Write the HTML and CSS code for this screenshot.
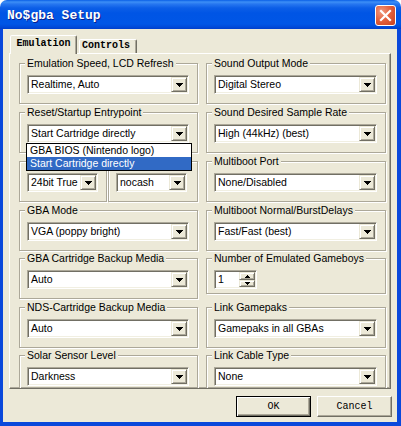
FILE: index.html
```html
<!DOCTYPE html>
<html>
<head>
<meta charset="utf-8">
<link rel="stylesheet" href="styles.css">
</head>
<body>
<div class="window">
  <div class="titlebar">
    <span class="title">No$gba Setup</span>
    <div class="close"><svg width="19" height="19" viewBox="0 0 19 19"><path d="M5 5L14 14M14 5L5 14" stroke="#fff" stroke-width="2.2" stroke-linecap="square"/></svg></div>
  </div>
  <div class="client">
    <div class="tabs">
      <div class="tab active">Emulation</div>
      <div class="tab">Controls</div>
    </div>
    <div class="panel">
      <div class="grid">
        <div class="group"><span class="legend">Emulation Speed, LCD Refresh</span>
          <div class="combo"><span class="val">Realtime, Auto</span><span class="drop"><svg width="7" height="4" viewBox="0 0 7 4"><path d="M0 0h7v1h-1v1h-1v1h-1v1h-1v-1h-1v-1h-1v-1h-1z"/></svg></span></div>
        </div>
        <div class="group"><span class="legend">Sound Output Mode</span>
          <div class="combo"><span class="val">Digital Stereo</span><span class="drop"><svg width="7" height="4" viewBox="0 0 7 4"><path d="M0 0h7v1h-1v1h-1v1h-1v1h-1v-1h-1v-1h-1v-1h-1z"/></svg></span></div>
        </div>

        <div class="group"><span class="legend">Reset/Startup Entrypoint</span>
          <div class="combo"><span class="val">Start Cartridge directly</span><span class="drop"><svg width="7" height="4" viewBox="0 0 7 4"><path d="M0 0h7v1h-1v1h-1v1h-1v1h-1v-1h-1v-1h-1v-1h-1z"/></svg></span>
            <div class="list">
              <div class="item">GBA BIOS (Nintendo logo)</div>
              <div class="item sel">Start Cartridge directly</div>
            </div>
          </div>
        </div>
        <div class="group"><span class="legend">Sound Desired Sample Rate</span>
          <div class="combo"><span class="val">High (44kHz) (best)</span><span class="drop"><svg width="7" height="4" viewBox="0 0 7 4"><path d="M0 0h7v1h-1v1h-1v1h-1v1h-1v-1h-1v-1h-1v-1h-1z"/></svg></span></div>
        </div>

        <div class="split">
          <div class="group small-a"><span class="legend empty"></span>
            <div class="combo"><span class="val">24bit True</span><span class="drop"><svg width="7" height="4" viewBox="0 0 7 4"><path d="M0 0h7v1h-1v1h-1v1h-1v1h-1v-1h-1v-1h-1v-1h-1z"/></svg></span></div>
          </div>
          <div class="group small-b"><span class="legend empty"></span>
            <div class="combo"><span class="val">nocash</span><span class="drop"><svg width="7" height="4" viewBox="0 0 7 4"><path d="M0 0h7v1h-1v1h-1v1h-1v1h-1v-1h-1v-1h-1v-1h-1z"/></svg></span></div>
          </div>
        </div>
        <div class="group"><span class="legend">Multiboot Port</span>
          <div class="combo"><span class="val">None/Disabled</span><span class="drop"><svg width="7" height="4" viewBox="0 0 7 4"><path d="M0 0h7v1h-1v1h-1v1h-1v1h-1v-1h-1v-1h-1v-1h-1z"/></svg></span></div>
        </div>

        <div class="group"><span class="legend">GBA Mode</span>
          <div class="combo"><span class="val">VGA (poppy bright)</span><span class="drop"><svg width="7" height="4" viewBox="0 0 7 4"><path d="M0 0h7v1h-1v1h-1v1h-1v1h-1v-1h-1v-1h-1v-1h-1z"/></svg></span></div>
        </div>
        <div class="group"><span class="legend">Multiboot Normal/BurstDelays</span>
          <div class="combo"><span class="val">Fast/Fast (best)</span><span class="drop"><svg width="7" height="4" viewBox="0 0 7 4"><path d="M0 0h7v1h-1v1h-1v1h-1v1h-1v-1h-1v-1h-1v-1h-1z"/></svg></span></div>
        </div>

        <div class="group"><span class="legend">GBA Cartridge Backup Media</span>
          <div class="combo"><span class="val">Auto</span><span class="drop"><svg width="7" height="4" viewBox="0 0 7 4"><path d="M0 0h7v1h-1v1h-1v1h-1v1h-1v-1h-1v-1h-1v-1h-1z"/></svg></span></div>
        </div>
        <div class="group short"><span class="legend">Number of Emulated Gameboys</span>
          <div class="spin"><span class="val">1</span>
            <span class="spinbtns">
              <span class="sbtn"><svg width="5" height="3" viewBox="0 0 5 3"><path d="M2 0h1v1h1v1h1v1h-5v-1h1v-1h1z"/></svg></span>
              <span class="sbtn"><svg width="5" height="3" viewBox="0 0 5 3"><path d="M0 0h5v1h-1v1h-1v1h-1v-1h-1v-1h-1z"/></svg></span>
            </span>
          </div>
        </div>

        <div class="group"><span class="legend">NDS-Cartridge Backup Media</span>
          <div class="combo"><span class="val">Auto</span><span class="drop"><svg width="7" height="4" viewBox="0 0 7 4"><path d="M0 0h7v1h-1v1h-1v1h-1v1h-1v-1h-1v-1h-1v-1h-1z"/></svg></span></div>
        </div>
        <div class="group"><span class="legend">Link Gamepaks</span>
          <div class="combo"><span class="val">Gamepaks in all GBAs</span><span class="drop"><svg width="7" height="4" viewBox="0 0 7 4"><path d="M0 0h7v1h-1v1h-1v1h-1v1h-1v-1h-1v-1h-1v-1h-1z"/></svg></span></div>
        </div>

        <div class="group"><span class="legend">Solar Sensor Level</span>
          <div class="combo"><span class="val">Darkness</span><span class="drop"><svg width="7" height="4" viewBox="0 0 7 4"><path d="M0 0h7v1h-1v1h-1v1h-1v1h-1v-1h-1v-1h-1v-1h-1z"/></svg></span></div>
        </div>
        <div class="group"><span class="legend">Link Cable Type</span>
          <div class="combo"><span class="val">None</span><span class="drop"><svg width="7" height="4" viewBox="0 0 7 4"><path d="M0 0h7v1h-1v1h-1v1h-1v1h-1v-1h-1v-1h-1v-1h-1z"/></svg></span></div>
        </div>
      </div>
    </div>
    <div class="buttons">
      <div class="btn default">OK</div>
      <div class="btn">Cancel</div>
    </div>
  </div>
</div>
</body>
</html>
```

FILE: styles.css
```css
* { box-sizing: border-box; }
body {
  margin: 0;
  background: #fff;
  font-family: "Liberation Sans", Arial, sans-serif;
  font-size: 10.5px;
  color: #000;
}
.window {
  width: 401px;
  height: 426px;
  display: flex;
  flex-direction: column;
}
.titlebar {
  height: 29px;
  flex: none;
  display: flex;
  justify-content: space-between;
  align-items: flex-start;
  padding: 0 5px 0 7px;
  border-radius: 7px 7px 0 0;
  background: linear-gradient(to bottom, #0A5FE6 0px, #3D8FF6 2px, #2777F0 4px, #0C5EE7 8px, #0055E5 13px, #0056E6 24px, #004AD9 27px, #003FCB 29px);
}
.title {
  font: bold 13px/15px "Liberation Mono", "Courier New", monospace;
  color: #fff;
  margin-top: 8px;
  text-shadow: 1px 1px 0 #0A1E8C;
  white-space: nowrap;
}
.close {
  width: 21px;
  height: 21px;
  margin-top: 5px;
  border: 1px solid #fff;
  border-radius: 3px;
  background: radial-gradient(circle at 30% 30%, #F09A80 0%, #E4623F 45%, #C83F1D 100%);
  display: flex;
  align-items: center;
  justify-content: center;
}
.close svg { display: block; }
.client {
  flex: 1;
  background: #ECE9D8;
  border-style: solid;
  border-color: #0A48DB;
  border-width: 0 4px 4px 3px;
}
.tabs {
  display: flex;
  align-items: flex-end;
  height: 18px;
  margin: 6px 0 0 7px;
}
.tab {
  font: bold 10px/12px "Liberation Mono", "Courier New", monospace;
  background: #ECE9D8;
  border: 1px solid;
  border-bottom: 0;
  border-color: #fff #716F64 transparent #fff;
  box-shadow: inset -1px 0 0 #ACA899;
  border-radius: 2px 2px 0 0;
  width: 58px;
  height: 14px;
  margin-left: 2px;
  padding-left: 2px;
  white-space: nowrap;
}
.tab.active {
  width: 67px;
  height: 19px;
  margin-left: 0;
  margin-bottom: -1px;
  padding: 2px 0 0 0;
  text-align: center;
  position: relative;
  z-index: 2;
}
.panel {
  margin-left: 6px;
  width: 382px;
  height: 336px;
  border: 1px solid;
  border-color: #fff #716F64 #716F64 #fff;
  box-shadow: inset -1px -1px 0 #ACA899;
  padding: 9px 4px 0 9px;
  overflow: hidden;
}
.grid {
  display: grid;
  grid-template-columns: 179px 180px;
  column-gap: 8px;
  grid-template-rows: 49px 49px 49px 48px 49px 48px 49px;
  align-items: start;
}
.group {
  height: 41px;
  border: 1px solid #ACA899;
  box-shadow: inset 1px 1px 0 #fff, 1px 1px 0 #fff;
  padding: 0 8px 0 7px;
}
.group.short { height: 36px; }
.legend {
  display: block;
  width: fit-content;
  height: 13px;
  margin: -7px 0 0 -2px;
  padding: 0 2px;
  background: #ECE9D8;
  line-height: 13px;
  white-space: nowrap;
}
.legend.empty { background: transparent; }
.split {
  display: flex;
  gap: 1px;
}
.group.small-a { width: 88px; }
.group.small-b { width: 90px; padding-right: 10px; }
.combo, .spin {
  margin-top: 5px;
  height: 19px;
  display: flex;
  background: #fff;
  border: 1px solid;
  border-color: #ACA899 #fff #fff #ACA899;
  box-shadow: inset 1px 1px 0 #716F64, inset -1px -1px 0 #F1EFE2;
  position: relative;
}
.val {
  flex: 1;
  padding-left: 3px;
  line-height: 17px;
  white-space: nowrap;
  overflow: hidden;
}
.drop, .sbtn {
  flex: none;
  width: 16px;
  height: 15px;
  margin: 1px;
  background: #ECE9D8;
  border: 1px solid;
  border-color: #ECE9D8 #716F64 #716F64 #ECE9D8;
  box-shadow: inset 1px 1px 0 #fff, inset -1px -1px 0 #ACA899;
  display: flex;
  align-items: center;
  justify-content: center;
}
.drop svg, .sbtn svg { display: block; }
.spin { width: 43px; }
.spinbtns {
  display: flex;
  flex-direction: column;
  margin: 1px;
}
.sbtn {
  margin: 0;
  height: 8px;
}
.sbtn + .sbtn { height: 7px; }
.list {
  position: absolute;
  left: -2px;
  top: 18px;
  width: 166px;
  border: 1px solid #000;
  background: #fff;
  z-index: 5;
}
.item {
  height: 13px;
  line-height: 13px;
  padding-left: 3px;
  white-space: nowrap;
}
.item.sel {
  background: #316AC5;
  color: #fff;
}
.buttons {
  display: flex;
  justify-content: flex-end;
  gap: 6px;
  margin: 7px 5px 0 0;
}
.btn {
  width: 75px;
  height: 21px;
  font: 10px/1 "Liberation Mono", "Courier New", monospace;
  display: flex;
  align-items: center;
  justify-content: center;
  background: #ECE9D8;
  border: 1px solid;
  border-color: #fff #716F64 #716F64 #fff;
  box-shadow: inset -1px -1px 0 #ACA899;
}
.btn.default {
  border-color: #000;
  box-shadow: inset 1px 1px 0 #fff, inset -1px -1px 0 #716F64, inset -2px -2px 0 #ACA899;
}
```
